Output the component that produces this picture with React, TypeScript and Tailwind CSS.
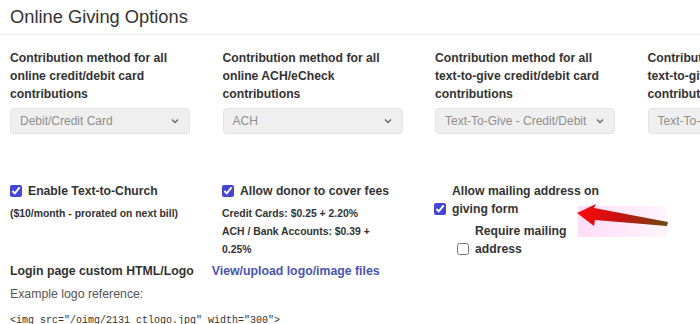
import React from 'react'

const methods = [
  { label: 'Contribution method for all online credit/debit card contributions', value: 'Debit/Credit Card' },
  { label: 'Contribution method for all online ACH/eCheck contributions', value: 'ACH' },
  { label: 'Contribution method for all text-to-give credit/debit card contributions', value: 'Text-To-Give - Credit/Debit' },
  { label: 'Contribution method for all text-to-give ACH/eCheck contributions', value: 'Text-To-Give - ACH' },
]

function Chevron() {
  return (
    <svg width="10" height="10" viewBox="0 0 10 10" className="shrink-0">
      <path d="M2 3.5 L5 6.5 L8 3.5" fill="none" stroke="#666" strokeWidth="1.3" />
    </svg>
  )
}

function Box({ checked }: { checked?: boolean }) {
  return (
    <input
      type="checkbox"
      defaultChecked={checked}
      className="m-0 w-[12px] h-[12px] shrink-0 accent-[#4646d6]"
    />
  )
}

function Arrow() {
  return (
    <svg className="absolute left-[570px] top-[198px]" width="105" height="42" viewBox="570 198 105 42">
      <defs>
        <linearGradient id="arrowFill" x1="577" y1="0" x2="668" y2="0" gradientUnits="userSpaceOnUse">
          <stop offset="0" stopColor="#ff0a0a" />
          <stop offset="0.45" stopColor="#c81010" />
          <stop offset="1" stopColor="#6e4a12" />
        </linearGradient>
        <linearGradient id="glow" x1="577" y1="0" x2="668" y2="0" gradientUnits="userSpaceOnUse">
          <stop offset="0" stopColor="#ffdcf7" />
          <stop offset="1" stopColor="#fff5fd" />
        </linearGradient>
      </defs>
      <rect x="578" y="206" width="89" height="31" fill="url(#glow)" />
      <polygon
        points="577,213 596,204 594,208 668,222 667,226 595,220 594,226"
        fill="url(#arrowFill)"
      />
    </svg>
  )
}

export default function App() {
  return (
    <div className="relative w-[700px] h-[324px] overflow-hidden bg-white text-[#333] font-['Liberation_Sans',Arial,sans-serif]">
      <h1 className="px-[10px] pt-[6px] pb-[6px] text-[18.3px] leading-[22px] font-normal border-b border-[#eee]">
        Online Giving Options
      </h1>

      <div className="flex pl-[10px] pt-[14px] w-[900px]">
        {methods.map(m => (
          <div key={m.value} className="w-[212.5px] shrink-0">
            <div className="w-[180px] text-[12.2px] font-bold leading-[18px]">{m.label}</div>
            <div className="mt-[5px] w-[180px] h-[26px] flex items-center justify-between px-[9px] bg-[#efefef] border border-[#e2e2e2] rounded-[4px] text-[12px] text-[#8e8e8e] whitespace-nowrap overflow-hidden">
              <span>{m.value}</span>
              <Chevron />
            </div>
          </div>
        ))}
      </div>

      <div className="flex pl-[10px] mt-[48px]">
        <div className="w-[212px] shrink-0">
          <label className="flex items-center gap-[6px] text-[12.2px] font-bold leading-[18px]">
            <Box checked />
            Enable Text-to-Church
          </label>
          <div className="mt-[5px] text-[10.4px] font-bold leading-[18px] whitespace-nowrap">
            ($10/month - prorated on next bill)
          </div>
        </div>

        <div className="w-[212px] shrink-0">
          <label className="flex items-center gap-[6px] text-[12.2px] font-bold leading-[18px]">
            <Box checked />
            Allow donor to cover fees
          </label>
          <div className="mt-[5px] w-[160px] text-[10.4px] font-bold leading-[18px]">
            <div>Credit Cards: $0.25 + 2.20%</div>
            <div>ACH / Bank Accounts: $0.39 + 0.25%</div>
          </div>
        </div>

        <div className="w-[212px] shrink-0">
          <label className="flex items-end gap-[6px] text-[12.2px] font-bold leading-[18px]">
            <span className="pb-[3px] flex"><Box checked /></span>
            <span className="w-[160px]">Allow mailing address on giving form</span>
          </label>
          <label className="mt-[4px] ml-[23px] flex items-end gap-[6px] text-[12.2px] font-bold leading-[18px]">
            <span className="pb-[3px] flex"><Box /></span>
            <span className="w-[100px]">Require mailing address</span>
          </label>
        </div>
      </div>

      <div className="flex items-center gap-[18px] px-[10px] mt-[3px] text-[12.3px] font-bold leading-[18px]">
        <span>Login page custom HTML/Logo</span>
        <a className="text-[#4b54b6]">View/upload logo/image files</a>
      </div>
      <div className="px-[10px] mt-[5px] text-[12.3px] leading-[18px] text-[#555]">Example logo reference:</div>
      <div className="px-[10px] mt-[10px] text-[10px] leading-[16px] font-['Liberation_Mono',monospace] whitespace-nowrap">
        {'<img src="/oimg/2131 ctlogo.jpg" width="300">'}
      </div>

      <Arrow />
    </div>
  )
}
